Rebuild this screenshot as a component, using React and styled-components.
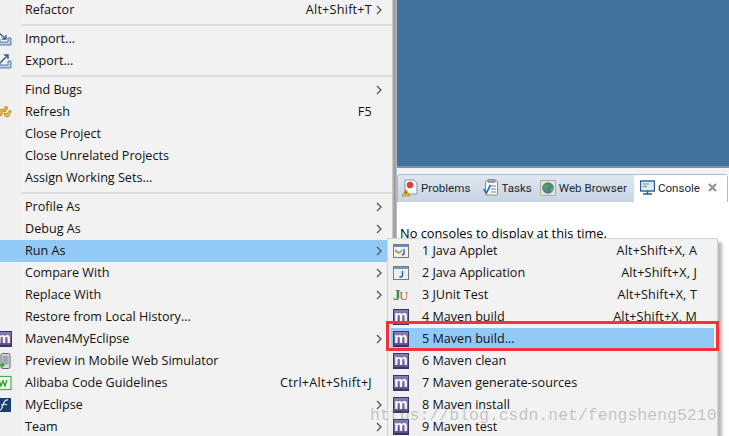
import React from "react";
import styled, { createGlobalStyle } from "styled-components";

const GlobalStyle = createGlobalStyle`
  html, body {
    margin: 0;
    padding: 0;
    background: #f0f0f0;
  }
`;

const Page = styled.div`
  position: relative;
  display: flex;
  width: 729px;
  height: 436px;
  overflow: hidden;
  font-family: "Open Sans", "Noto Sans", "Liberation Sans", sans-serif;
  font-size: 12.6px;
  color: #111;
`;

const ContextMenu = styled.div`
  flex: 0 0 392px;
  margin-top: -1px;
  background: linear-gradient(to right, #f0f0f0 21px, #f2f2f2 21px);
`;

const Row = styled.div`
  display: flex;
  align-items: center;
  height: 22px;
  background: ${(p) => (p.$active ? "#91c9f7" : "transparent")};
`;

const IconSlot = styled.div`
  flex: 0 0 25px;
  display: flex;
  align-items: center;
  overflow: hidden;
`;

const Label = styled.span`
  flex: 1;
  padding-bottom: 2px;
  white-space: nowrap;
`;

const Shortcut = styled.span`
  padding-bottom: 2px;
  letter-spacing: 0.25px;
  white-space: nowrap;
  margin-right: ${(p) => (p.$withArrow ? "0" : "20px")};
`;

const ArrowSlot = styled.span`
  flex: 0 0 20px;
  display: flex;
  justify-content: flex-end;
  padding-right: 10px;
  box-sizing: border-box;
`;

const Separator = styled.div`
  height: 7px;
  display: flex;
  align-items: center;
  padding-left: 21px;

  &::after {
    content: "";
    flex: 1;
    height: 2px;
    background: #dcdcdc;
  }
`;

const Splitter = styled.div`
  flex: 0 0 5px;
  background: linear-gradient(to right, #d6d6d6, #9d9d9d 40%, #a8a8a8 80%, #c4c8cc);
`;

const Workbench = styled.div`
  flex: 1;
  display: flex;
  flex-direction: column;
  min-width: 0;
  background: #fff;
`;

const EditorArea = styled.div`
  height: 166px;
  background: #44729f;
  border-bottom: 2px solid #7e93a8;
`;

const ViewGap = styled.div`
  height: 6px;
  background: #f1f4f7;
`;

const TabBar = styled.div`
  display: flex;
  height: 27px;
  margin-right: 1px;
  border-top: 1px solid #a9bbcc;
  border-left: 1px solid #a9bbcc;
  border-right: 1px solid #a9bbcc;
  border-radius: 3px 3px 0 0;
  background: linear-gradient(to bottom, #dfe8f1, #c6d4e2);
  font-family: Roboto, "Liberation Sans", sans-serif;
  font-size: 11.6px;
`;

const Tab = styled.div`
  display: flex;
  align-items: center;
  gap: 3px;
  padding: 0 ${(p) => p.$right}px 2px ${(p) => p.$left}px;
  color: #1c2833;
  background: ${(p) => (p.$selected ? "#fff" : "transparent")};
  flex: ${(p) => (p.$selected ? "1" : "0 0 auto")};
  white-space: nowrap;
`;

const CloseMark = styled.span`
  margin-left: 5px;
  display: flex;
`;

const ConsoleBody = styled.div`
  flex: 1;
  padding: 22px 0 0 3px;
  background: #fff;
  font-size: 12.8px;
  color: #000;
  white-space: nowrap;
`;

const SubMenu = styled.div`
  position: absolute;
  left: 387px;
  top: 238px;
  width: 331px;
  height: 200px;
  padding: 1px 3px 0;
  box-sizing: border-box;
  background: linear-gradient(to right, #f0f0f0 35px, #f2f2f2 35px);
  border: 1px solid #d4d4d4;
  box-shadow: 4px 4px 3px rgba(0, 0, 0, 0.28);
`;

const SubRow = styled.div`
  display: flex;
  align-items: center;
  height: 22px;
  background: ${(p) => (p.$active ? "#91c9f7" : "transparent")};
`;

const SubIcon = styled.div`
  flex: 0 0 31px;
  display: flex;
  padding-left: 2px;
  box-sizing: border-box;
`;

const SubShortcut = styled.span`
  padding-bottom: 2px;
  margin-right: 17px;
  letter-spacing: 0.15px;
  white-space: nowrap;
`;

const MavenBadge = styled.span`
  display: inline-flex;
  flex: 0 0 auto;
  align-items: center;
  justify-content: center;
  width: 16px;
  height: 16px;
  margin-left: ${(p) => (p.$clipped ? "-4px" : "0")};
  box-sizing: border-box;
  border: 1px solid #3c3460;
  border-bottom-width: 2px;
  background: linear-gradient(to bottom, #8a7cb4, #5f5090);
  color: #fff;
  font-family: "Liberation Sans", sans-serif;
  font-weight: 700;
  font-size: 15px;
  line-height: 1;
  padding-bottom: 3px;
`;

const JUnitMark = styled.span`
  font-family: "Liberation Serif", serif;
  font-weight: 700;
  font-size: 15px;
  letter-spacing: -1px;
  color: #2c8a4e;

  & > i {
    font-style: normal;
    font-weight: 400;
    font-size: 12px;
    color: #c8453c;
  }
`;

const HighlightBox = styled.div`
  position: absolute;
  left: 386px;
  top: 321px;
  width: 333px;
  height: 30px;
  box-sizing: border-box;
  border: 3px solid #fb3038;
`;

const Watermark = styled.div`
  position: absolute;
  left: 370px;
  top: 406px;
  font-family: "Liberation Mono", monospace;
  font-size: 16.5px;
  color: rgba(110, 110, 110, 0.36);
  white-space: nowrap;
`;

const Chevron = () => (
  <svg width="6" height="10" viewBox="0 0 6 10">
    <path d="M1 1l4 4-4 4" fill="none" stroke="#555" strokeWidth="1.3" />
  </svg>
);

const ClippedIcon = ({ children }) => (
  <svg width="16" height="16" viewBox="0 0 16 16" style={{ marginLeft: -4, flex: "none" }}>
    {children}
  </svg>
);

const ImportIcon = () => (
  <ClippedIcon>
    <path d="M1 8v6h14V7h-3v4H4V8z" fill="#b9cde2" stroke="#5f7fa3" />
    <path d="M3 2l7 6M6 8h4V4" fill="none" stroke="#2f5f96" strokeWidth="1.4" />
  </ClippedIcon>
);

const ExportIcon = () => (
  <ClippedIcon>
    <path d="M1 9v6h14V8h-3v4H4V9z" fill="#b9cde2" stroke="#5f7fa3" />
    <path d="M4 10l8-8M8 2h4v4" fill="none" stroke="#2f5f96" strokeWidth="1.4" />
  </ClippedIcon>
);

const RefreshIcon = () => (
  <ClippedIcon>
    <path d="M2 9l3-4 2 1 3-4 2 2-3 4-2-1-2 5z" fill="#e8b83a" stroke="#a87a14" strokeWidth="0.8" />
    <path d="M8 9l3 1 3-4 1 2-3 5-3-1z" fill="#f1c94c" stroke="#a87a14" strokeWidth="0.8" />
  </ClippedIcon>
);

const PhoneIcon = () => (
  <ClippedIcon>
    <rect x="5" y="0.5" width="9" height="15" rx="1.5" fill="#d8dcdf" stroke="#666" />
    <rect x="6.5" y="2.5" width="6" height="9" fill="#9fa8ad" />
    <path d="M1 11h5v-2l3 3-3 3v-2H1z" fill="#42a04a" />
  </ClippedIcon>
);

const AlibabaIcon = () => (
  <ClippedIcon>
    <rect x="1" y="1.5" width="14" height="13" fill="#f4fbf2" stroke="#3fb43c" strokeWidth="1.2" />
    <path d="M3 5l2 6 2-5 2 5 2-6" fill="none" stroke="#2f9e35" strokeWidth="1.4" />
  </ClippedIcon>
);

const MyEclipseIcon = () => (
  <ClippedIcon>
    <rect x="1" y="1" width="14" height="14" fill="#17406f" />
    <path d="M12 3c-3-1-4 2-5 5s-2 6-4 5M5 8c3-1 5-1 6 0" fill="none" stroke="#eaf1f8" strokeWidth="1.1" />
  </ClippedIcon>
);

const AppletIcon = () => (
  <svg width="16" height="14" viewBox="0 0 16 14">
    <rect x="0.5" y="0.5" width="15" height="13" fill="#eef2f6" stroke="#7d7a70" />
    <rect x="1" y="1" width="14" height="2" fill="#5f8fc0" />
    <path d="M2 5l4 3 3-3v3l-3 2-4-2z" fill="#c89a4c" />
    <path d="M11 5v5l-2 1" fill="none" stroke="#2d5f97" strokeWidth="1.4" />
  </svg>
);

const JavaAppIcon = () => (
  <svg width="16" height="14" viewBox="0 0 16 14">
    <rect x="0.5" y="0.5" width="15" height="13" fill="#e9f0f7" stroke="#7d7a70" />
    <rect x="1" y="1" width="14" height="2" fill="#6d9bcb" />
    <path d="M9.5 5v5l-1.2 1H6.5" fill="none" stroke="#2d5f97" strokeWidth="1.4" />
  </svg>
);

const ProblemsIcon = () => (
  <svg width="16" height="18" viewBox="0 0 16 18">
    <path d="M3 1h9l3 3v11H3z" fill="#f7f8fa" stroke="#8b97a6" />
    <circle cx="8" cy="6" r="3.2" fill="#df3b3b" />
    <path d="M4 10.5l4 6.5H0z" fill="#f2b733" stroke="#a8761a" strokeWidth="0.6" />
    <path d="M4 12.5v2.5" stroke="#4a3208" strokeWidth="1" />
  </svg>
);

const TasksIcon = () => (
  <svg width="15" height="17" viewBox="0 0 15 17">
    <rect x="2.5" y="2" width="12" height="14" rx="1" fill="#fff" stroke="#a08a60" />
    <rect x="5" y="0.5" width="7" height="3" fill="#9aa4ad" stroke="#6f7a85" strokeWidth="0.6" />
    <path d="M8 7h5M8 10h5M8 13h5" stroke="#6d7f94" />
    <path d="M0.5 10l3 4 4-8" fill="none" stroke="#1f6fd0" strokeWidth="1.7" />
  </svg>
);

const GlobeIcon = () => (
  <svg width="16" height="16" viewBox="0 0 16 16">
    <rect x="0.5" y="0.5" width="15" height="15" fill="#e8e4d4" stroke="#b3ad90" />
    <circle cx="8" cy="8" r="5.8" fill="#3f7fb0" />
    <path d="M5 4l4-1 1 3-3 2 1 4-3-2-2-3z" fill="#5f9a52" />
    <path d="M10 8l3-1v3l-2 2z" fill="#6a9d50" />
  </svg>
);

const ConsoleIcon = () => (
  <svg width="15" height="15" viewBox="0 0 15 15">
    <rect x="0.5" y="1" width="14" height="10" fill="#dfeaf5" stroke="#2b5c94" strokeWidth="1.4" />
    <path d="M3 4h6M3 6.5h4" stroke="#5d86b3" />
    <path d="M3 14h9M7.5 11v3" stroke="#2b5c94" strokeWidth="1.6" />
  </svg>
);

const CloseIcon = () => (
  <svg width="9" height="9" viewBox="0 0 9 9">
    <path d="M1 1l7 7M8 1l-7 7" stroke="#8f9499" strokeWidth="2.2" />
  </svg>
);

const menu = [
  { label: "Refactor", shortcut: "Alt+Shift+T", arrow: true },
  "sep",
  { label: "Import...", icon: <ImportIcon /> },
  { label: "Export...", icon: <ExportIcon /> },
  "sep",
  { label: "Find Bugs", arrow: true },
  { label: "Refresh", shortcut: "F5", icon: <RefreshIcon /> },
  { label: "Close Project" },
  { label: "Close Unrelated Projects" },
  { label: "Assign Working Sets..." },
  "sep",
  { label: "Profile As", arrow: true },
  { label: "Debug As", arrow: true },
  { label: "Run As", arrow: true, active: true },
  { label: "Compare With", arrow: true },
  { label: "Replace With", arrow: true },
  { label: "Restore from Local History..." },
  { label: "Maven4MyEclipse", arrow: true, icon: <MavenBadge $clipped>m</MavenBadge> },
  { label: "Preview in Mobile Web Simulator", icon: <PhoneIcon /> },
  { label: "Alibaba Code Guidelines", shortcut: "Ctrl+Alt+Shift+J", icon: <AlibabaIcon /> },
  { label: "MyEclipse", arrow: true, icon: <MyEclipseIcon /> },
  { label: "Team", arrow: true },
];

const runAs = [
  { label: "1 Java Applet", shortcut: "Alt+Shift+X, A", icon: <AppletIcon /> },
  { label: "2 Java Application", shortcut: "Alt+Shift+X, J", icon: <JavaAppIcon /> },
  { label: "3 JUnit Test", shortcut: "Alt+Shift+X, T", icon: <JUnitMark>J<i>U</i></JUnitMark> },
  { label: "4 Maven build", shortcut: "Alt+Shift+X, M", icon: <MavenBadge>m</MavenBadge> },
  { label: "5 Maven build...", icon: <MavenBadge>m</MavenBadge>, active: true },
  { label: "6 Maven clean", icon: <MavenBadge>m</MavenBadge> },
  { label: "7 Maven generate-sources", icon: <MavenBadge>m</MavenBadge> },
  { label: "8 Maven install", icon: <MavenBadge>m</MavenBadge> },
  { label: "9 Maven test", icon: <MavenBadge>m</MavenBadge> },
];

const tabs = [
  { label: "Problems", icon: <ProblemsIcon />, right: 9 },
  { label: "Tasks", icon: <TasksIcon />, right: 4 },
  { label: "Web Browser", icon: <GlobeIcon />, right: 7 },
];

export default function App() {
  return (
    <Page>
      <GlobalStyle />
      <ContextMenu>
        {menu.map((item, i) =>
          item === "sep" ? (
            <Separator key={i} />
          ) : (
            <Row key={i} $active={item.active}>
              <IconSlot>{item.icon}</IconSlot>
              <Label>{item.label}</Label>
              {item.shortcut && <Shortcut $withArrow={item.arrow}>{item.shortcut}</Shortcut>}
              {item.arrow && (
                <ArrowSlot>
                  <Chevron />
                </ArrowSlot>
              )}
            </Row>
          )
        )}
      </ContextMenu>
      <Splitter />
      <Workbench>
        <EditorArea />
        <ViewGap />
        <TabBar>
          {tabs.map((tab) => (
            <Tab key={tab.label} $left={4} $right={tab.right}>
              {tab.icon}
              {tab.label}
            </Tab>
          ))}
          <Tab $selected $left={6} $right={0}>
            <ConsoleIcon />
            Console
            <CloseMark>
              <CloseIcon />
            </CloseMark>
          </Tab>
        </TabBar>
        <ConsoleBody>No consoles to display at this time.</ConsoleBody>
      </Workbench>
      <SubMenu>
        {runAs.map((item) => (
          <SubRow key={item.label} $active={item.active}>
            <SubIcon>{item.icon}</SubIcon>
            <Label>{item.label}</Label>
            {item.shortcut && <SubShortcut>{item.shortcut}</SubShortcut>}
          </SubRow>
        ))}
      </SubMenu>
      <HighlightBox />
      <Watermark>https://blog.csdn.net/fengsheng5210</Watermark>
    </Page>
  );
}
